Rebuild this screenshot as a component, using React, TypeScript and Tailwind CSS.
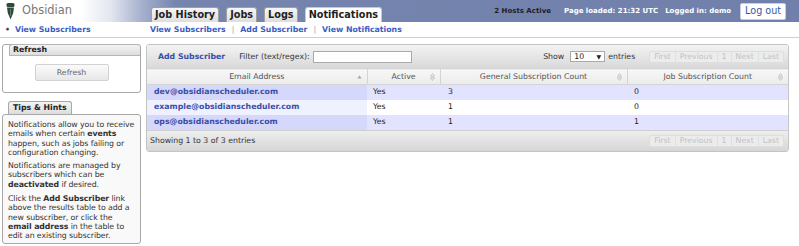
import React from "react";

const tabs = [
  { name: "Job History", active: false },
  { name: "Jobs", active: false },
  { name: "Logs", active: false },
  { name: "Notifications", active: true },
];

const subscribers = [
  { email: "dev@obsidianscheduler.com", active: "Yes", general: 3, job: 0 },
  { email: "example@obsidianscheduler.com", active: "Yes", general: 1, job: 0 },
  { email: "ops@obsidianscheduler.com", active: "Yes", general: 1, job: 1 },
];

function Logo() {
  return (
    <svg width="9" height="17" viewBox="0 0 9 17" className="shrink-0">
      <rect x="0.5" y="0" width="8" height="4" rx="1.5" fill="#2f4a3c" />
      <path d="M1 4.5 H8 L7.2 10 L4.5 16.5 L1.8 10 Z" fill="#2f4a3c" />
      <path d="M4.5 6 V13" stroke="#6f8a78" strokeWidth="0.8" />
    </svg>
  );
}

function SortBoth() {
  return (
    <svg width="5" height="8" viewBox="0 0 5 8">
      <path d="M2.5 0.5 L4.5 3.2 H0.5 Z M2.5 7.5 L4.5 4.8 H0.5 Z" fill="none" stroke="#b5b5b5" strokeWidth="0.7" />
    </svg>
  );
}

function SortUp() {
  return (
    <svg width="5" height="4" viewBox="0 0 5 4">
      <path d="M2.5 0.5 L4.7 3.5 H0.3 Z" fill="#a8a8a8" />
    </svg>
  );
}

function Pager() {
  return (
    <div className="flex h-[12px] text-[7.8px] text-[#c2c2c2] border border-[#dedede] rounded-[2px] bg-[#ececec]">
      {["First", "Previous", "1", "Next", "Last"].map((p, i) => (
        <span key={p} className={`flex items-center px-[4px] ${i > 0 ? "border-l border-[#e0e0e0]" : ""}`}>{p}</span>
      ))}
    </div>
  );
}

export default function App() {
  return (
    <div className="w-[799px] h-[246px] overflow-hidden bg-white font-['DejaVu_Sans',Verdana,sans-serif] text-[#222]">
      {/* top bar */}
      <div className="h-[22px] flex items-end bg-[linear-gradient(90deg,#ffffff_0px,#ffffff_80px,#e4e7f0_110px,#a9b3cf_140px,#7585ae_175px,#7080ab_100%)]">
        <div className="w-[151px] h-full flex items-center pl-[6px] gap-[7px]">
          <Logo />
          <span className="text-[11.4px] text-[#777] leading-none">Obsidian</span>
        </div>
        <div className="flex items-end gap-[7px]">
          {tabs.map((t) => (
            <div
              key={t.name}
              className={`h-[15px] px-[3px] flex items-center text-[9.7px] font-bold rounded-t-[3px] border border-b-0 leading-none ${
                t.active ? "bg-white border-[#c8c8c8] text-[#222]" : "bg-[linear-gradient(#f6f6f6,#dedede)] border-[#a0a0a0] text-[#222]"
              }`}
            >
              {t.name}
            </div>
          ))}
        </div>
        <div className="flex-1" />
        <div className="h-full flex items-center text-[7px] font-bold pr-[13px]">
          <span className="text-[#1e1e2a]">2 Hosts Active</span>
          <span className="text-white ml-[13px]">Page loaded: 21:32 UTC</span>
          <span className="text-white ml-[7px]">Logged in: demo</span>
          <button className="ml-[9px] h-[17px] px-[4px] bg-white border border-[#c9cde0] rounded-[2px] text-[9.6px] font-normal text-[#2f5aa8] leading-none">
            Log out
          </button>
        </div>
      </div>

      {/* sub navigation */}
      <div className="h-[16px] flex items-center border-b border-[#cfcfcf] text-[7.8px] font-bold text-[#3a5cc4]">
        <div className="w-[150px] pl-[5px] flex items-center">
          <span className="text-[#444] mr-[5px]">•</span>
          <span>View Subscribers</span>
        </div>
        <span>View Subscribers</span>
        <span className="text-[#9aa] font-normal mx-[6px]">|</span>
        <span>Add Subscriber</span>
        <span className="text-[#9aa] font-normal mx-[6px]">|</span>
        <span>View Notifications</span>
      </div>

      <div className="flex items-start pt-[6px]">
        {/* sidebar */}
        <div className="w-[146px] pl-[2px] pr-[5px] flex flex-col">
          <div className="border border-[#a8a8a8] rounded-[3px] h-[49px] flex flex-col">
            <div className="h-[12px] flex items-center px-[3px] text-[7.8px] font-bold bg-[linear-gradient(#f4f4f4,#dddddd)] border-b border-[#b5b5b5] rounded-t-[3px] ml-[6px] -mt-[1px] border-l border-t">
              Refresh
            </div>
            <div className="flex-1 flex items-start justify-center pt-[8px]">
              <button className="w-[74px] h-[17px] border border-[#d2d2d2] rounded-[2px] bg-[linear-gradient(#fafafa,#e8e8e8)] text-[7.8px] text-[#666] leading-none">
                Refresh
              </button>
            </div>
          </div>

          <div className="mt-[8px] flex">
            <div className="ml-[6px] h-[13px] px-[4px] flex items-center text-[7.8px] font-bold border border-b-0 border-[#a8a8a8] rounded-t-[3px] bg-[linear-gradient(#f4f4f4,#dddddd)]">
              Tips &amp; Hints
            </div>
          </div>
          <div className="border border-[#a8a8a8] rounded-[3px] bg-[#f9f9f9] pl-[5px] pr-[4px] pt-[5px] text-[7.8px] leading-[9.3px] text-[#333] h-[130px] tracking-[-0.1px]">
            <p>
              Notifications allow you to receive emails when certain <b>events</b> happen, such as jobs failing or configuration changing.
            </p>
            <p className="mt-[4px]">
              Notifications are managed by subscribers which can be <b>deactivated</b> if desired.
            </p>
            <p className="mt-[5px]">
              Click the <b>Add Subscriber</b> link above the results table to add a new subscriber, or click the <b>email address</b> in the table to edit an existing subscriber.
            </p>
          </div>
        </div>

        {/* main panel */}
        <div className="w-[643px] border border-[#c4c4c4] rounded-[3px] overflow-hidden text-[7.8px]">
          <div className="h-[23px] flex items-center bg-[linear-gradient(#f3f3f3,#d9d9d9)] pl-[11px] pr-[4px]">
            <span className="font-bold text-[#3a4ea8]">Add Subscriber</span>
            <span className="ml-[14px] text-[#333]">Filter (text/regex):</span>
            <div className="ml-[3px] w-[99px] h-[12px] bg-white border border-[#a9a9a9]" />
            <div className="flex-1" />
            <span className="text-[#333]">Show</span>
            <div className="ml-[6px] w-[35px] h-[11px] bg-white border border-[#a9a9a9] flex items-center justify-between px-[3px] text-[#222]">
              <span>10</span>
              <span className="text-[6px]">▼</span>
            </div>
            <span className="ml-[3px] text-[#333]">entries</span>
            <div className="ml-[14px]">
              <Pager />
            </div>
          </div>

          <table className="w-full border-collapse table-fixed">
            <colgroup>
              <col className="w-[220px]" />
              <col className="w-[73px]" />
              <col className="w-[187px]" />
              <col />
            </colgroup>
            <thead>
              <tr className="h-[16px] bg-[linear-gradient(#f7f7f7,#ececec)] text-[#555] border-y border-[#d4d4d4]">
                {["Email Address", "Active", "General Subscription Count", "Job Subscription Count"].map((h, i) => (
                  <th key={h} className={`font-normal p-0 ${i > 0 ? "border-l border-[#d4d4d4]" : ""}`}>
                    <div className="relative flex items-center justify-center h-[15px]">
                      <span>{h}</span>
                      <span className="absolute right-[5px] top-1/2 -translate-y-1/2 flex">
                        {i === 0 ? <SortUp /> : <SortBoth />}
                      </span>
                    </div>
                  </th>
                ))}
              </tr>
            </thead>
            <tbody>
              {subscribers.map((s, i) => {
                const odd = i % 2 === 0;
                return (
                  <tr key={s.email} className={`h-[15px] ${odd ? "bg-[#e2e4ff]" : "bg-white"}`}>
                    <td className={`pl-[7px] font-bold text-[#3a4ea8] ${odd ? "bg-[#d5d8fa]" : "bg-[#f0f1ff]"}`}>{s.email}</td>
                    <td className="pl-[6px]">{s.active}</td>
                    <td className="pl-[8px]">{s.general}</td>
                    <td className="pl-[7px]">{s.job}</td>
                  </tr>
                );
              })}
            </tbody>
          </table>

          <div className="h-[21px] flex items-center justify-between bg-[linear-gradient(#eeeeee,#d6d6d6)] border-t border-[#cfcfcf] pl-[3px] pr-[4px]">
            <span className="text-[#333]">Showing 1 to 3 of 3 entries</span>
            <Pager />
          </div>
        </div>
      </div>
    </div>
  );
}
